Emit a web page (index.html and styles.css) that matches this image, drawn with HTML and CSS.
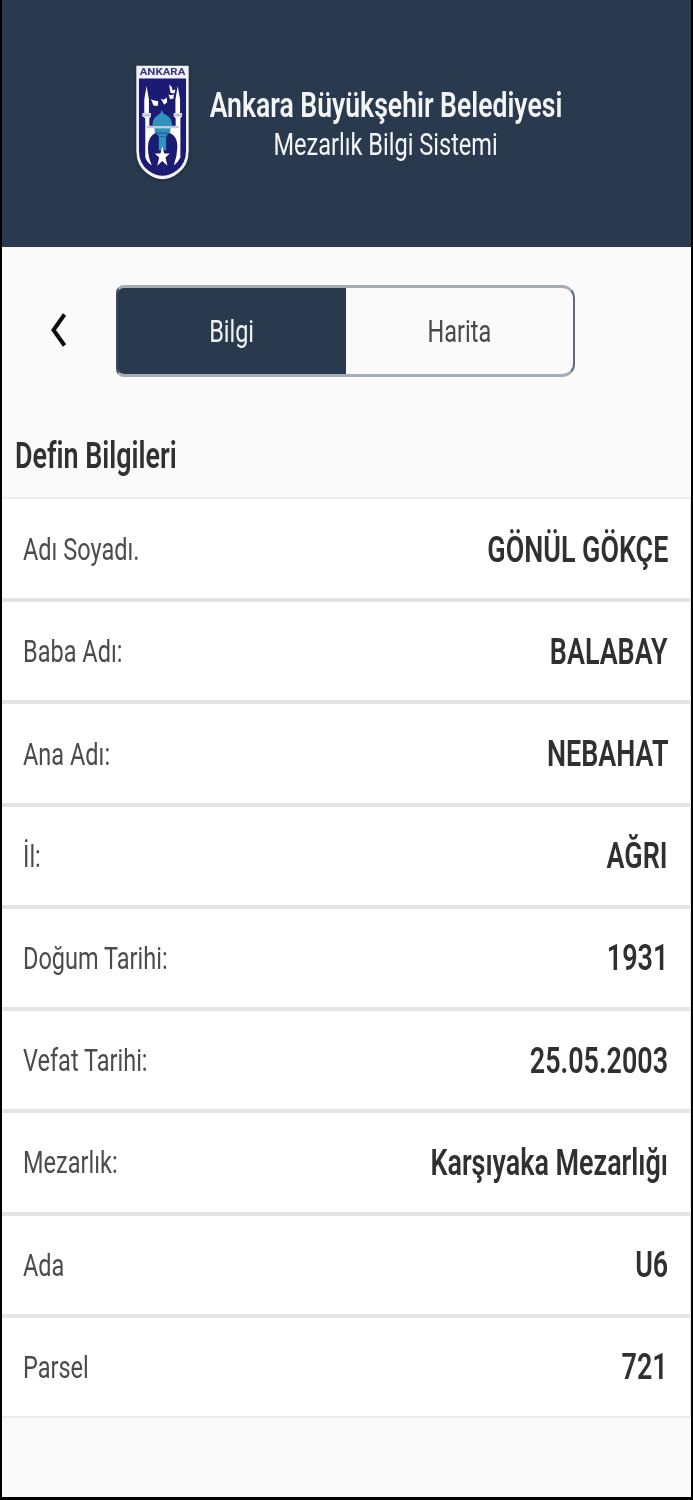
FILE: index.html
```
<!DOCTYPE html>
<html lang="tr">
<head>
    <meta charset="utf-8" />
    <title>Mezarlık Bilgi Sistemi</title>
    <link rel="stylesheet" href="styles.css">
</head>
<body>
<div class="screen">
    <header class="banner">
        <svg class="logo" viewBox="48 32 160 345" aria-label="Ankara">
            <path class="shield-edge" d="M49 33H207V290Q207 335 175 358Q128 394 81 358Q49 335 49 290Z"/>
            <path class="shield" d="M57 72H199V290Q199 330 170 350Q128 381 86 350Q57 330 57 290Z"/>
            <text class="logo-text" x="128" y="60" textLength="138" lengthAdjust="spacingAndGlyphs">ANKARA</text>
            <!-- minarets -->
            <path class="stone" d="M80 94L87 134V176H93V186L89 192V218H167V192L163 186V176H167V134L174 94L181 134V176H187V186L182 192V310Q174 326 162 334Q172 308 173 278Q173 245 150 236H106Q84 248 84 278Q84 310 96 334Q82 326 76 310V192L68 186V176H73V134Z"/>
            <path class="shield" d="M89 192H167V215H89Z"/>
            <path class="ledge" d="M67 177H93V187H67ZM161 177H187V187H161ZM80 214H177V222H80Z"/>
            <!-- dome -->
            <path class="dome" d="M98 215Q96 191 116 181Q123 178 126 166Q129 178 138 181Q159 191 157 215ZM104 222H152V230Q150 238 142 242L139 246V288H117V246L113 242Q105 238 104 230Z"/>
            <path class="shade" d="M108 235H148V239H108ZM114 245H142V248H114Z"/>
            <path class="stone" d="M127 276L133 298H150L137 310L143 335L127 321L112 335L118 310L105 298H122Z"/>
            <!-- birds -->
            <path class="stone" d="M93 134L103 138L115 140L114 155L101 153ZM123 133L132 136L141 129L142 143L133 151ZM146 120L154 122L162 119L161 132L151 134ZM148 90L156 97L158 107L167 105L164 117L152 115Z"/>
        </svg>
        <div class="banner-text">
            <h1><span class="narrow">Ankara Büyükşehir Belediyesi</span></h1>
            <p><span class="narrow">Mezarlık Bilgi Sistemi</span></p>
        </div>
    </header>
    <nav class="toolbar">
        <svg class="back" viewBox="0 0 18 36" aria-label="Geri">
            <path d="M15.5 2.5L4.5 18L15.5 33.5"/>
        </svg>
        <div class="tabs">
            <div class="tab active"><span class="narrow">Bilgi</span></div>
            <div class="tab"><span class="narrow">Harita</span></div>
        </div>
    </nav>
    <h2 class="section"><span class="narrow">Defin Bilgileri</span></h2>
    <dl class="list">
        <div class="row"><dt class="narrow">Adı Soyadı.</dt><dd class="narrow">GÖNÜL GÖKÇE</dd></div>
        <div class="row"><dt class="narrow">Baba Adı:</dt><dd class="narrow">BALABAY</dd></div>
        <div class="row"><dt class="narrow">Ana Adı:</dt><dd class="narrow">NEBAHAT</dd></div>
        <div class="row"><dt class="narrow">İl:</dt><dd class="narrow">AĞRI</dd></div>
        <div class="row"><dt class="narrow">Doğum Tarihi:</dt><dd class="narrow">1931</dd></div>
        <div class="row"><dt class="narrow">Vefat Tarihi:</dt><dd class="narrow">25.05.2003</dd></div>
        <div class="row"><dt class="narrow">Mezarlık:</dt><dd class="narrow">Karşıyaka Mezarlığı</dd></div>
        <div class="row"><dt class="narrow">Ada</dt><dd class="narrow">U6</dd></div>
        <div class="row"><dt class="narrow">Parsel</dt><dd class="narrow">721</dd></div>
    </dl>
</div>
</body>
</html>
```
FILE: styles.css
```
* { box-sizing: border-box; }
body, h1, h2, p, dl, dd { margin: 0; }
body {
    background: #000;
    font-family: Roboto, sans-serif;
    color: #303030;
}
.screen {
    height: 1500px;
    border: solid #000;
    border-width: 0 2px 3px;
    background: #fafafa;
}
/* condensed lettering */
.narrow {
    display: inline-block;
    white-space: nowrap;
    transform: scaleX(0.76);
}
.banner {
    display: flex;
    height: 247px;
    padding: 65px 0 0 134px;
    background: #293a4e;
    color: #f4f5f6;
}
.logo {
    width: 53px;
    height: 115px;
    filter: drop-shadow(0 1px 2px rgba(0,0,0,0.35));
}
.shield-edge { fill: #f3f2f8; }
.shield { fill: #1c1b73; }
.stone { fill: #fff; }
.ledge { fill: #c6c6df; }
.dome { fill: #3092bd; }
.shade { fill: #1c6ba0; }
.logo-text {
    font: bold 25px Roboto, sans-serif;
    text-anchor: middle;
    fill: #3b3987;
}
.banner-text {
    display: flex;
    flex-direction: column;
    align-items: center;
    width: 352px;
    margin: 21px 0 0 21px;
}
.banner-text h1 {
    font-size: 35px;
    font-weight: 600;
    line-height: 40px;
}
.banner-text p {
    font-size: 31px;
    line-height: 38px;
}
.toolbar {
    display: flex;
    align-items: center;
    height: 168px;
    padding-left: 47px;
}
.back {
    width: 18px;
    height: 36px;
    margin-top: -3px;
    fill: none;
    stroke: #0c0c0c;
    stroke-width: 4;
}
.tabs {
    display: flex;
    width: 459px;
    height: 92px;
    margin-left: 49px;
    border: solid #a5adb5;
    border-width: 3px 2px;
    border-left-color: #3c4c5f;
    border-right-color: #5b6b7c;
    border-radius: 8px 13px 13px 8px;
    overflow: hidden;
}
.tab {
    flex: 1;
    text-align: center;
    font-size: 32px;
    line-height: 86px;
    color: #484848;
}
.tab.active {
    background: #293a4e;
    color: #eff1f3;
}
.tab .narrow { transform: scaleX(0.733); }
.section {
    height: 82px;
    padding-left: 13px;
    font-size: 36px;
    font-weight: 600;
    line-height: 82px;
}
.section .narrow {
    transform: scaleX(0.747);
    transform-origin: left;
}
.list {
    display: flex;
    flex-direction: column;
    height: 921px;
    border: 2px solid #ebeded;
    border-width: 2px 1px 2px 0;
    background: #fff;
}
.row {
    flex: 1;
    display: flex;
    justify-content: space-between;
    align-items: center;
    padding: 1px 22px 0 21px;
}
.row + .row {
    padding-top: 0;
    border-top: 4px solid #e3e4e4;
}
dt.narrow {
    font-size: 32px;
    color: #4c4c4c;
    transform: scaleX(0.735);
    transform-origin: left;
}
dd.narrow {
    padding-top: 1px;
    font-size: 36px;
    font-weight: 600;
    transform: scaleX(0.747);
    transform-origin: right;
}
```
